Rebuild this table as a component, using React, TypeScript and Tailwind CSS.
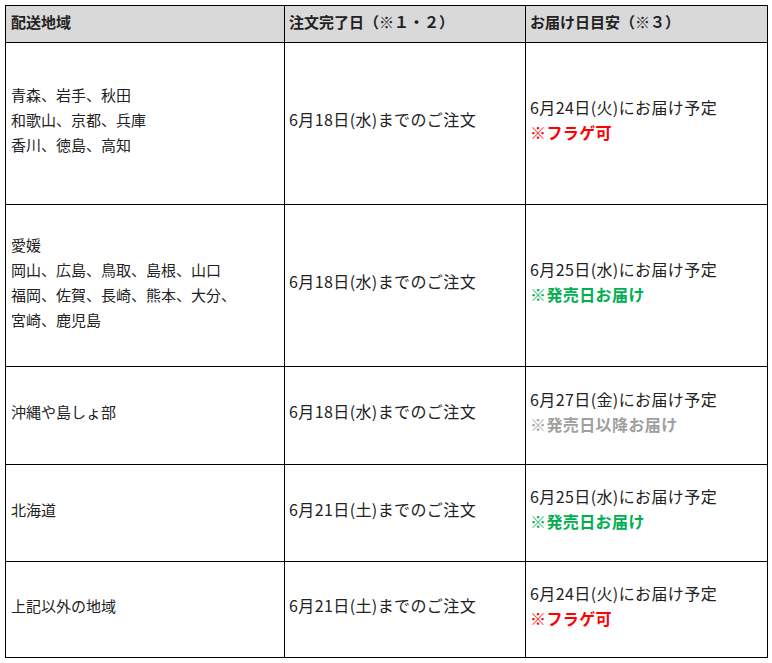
const font = { fontFamily: '"Noto Sans CJK JP", "Noto Sans", sans-serif' }

type Note = { text: string; color: string }

const rows: { h: string; areas: string[]; order: string; delivery: string; note: Note }[] = [
  {
    h: "h-[162px]",
    areas: ["青森、岩手、秋田", "和歌山、京都、兵庫", "香川、徳島、高知"],
    order: "6月18日(水)までのご注文",
    delivery: "6月24日(火)にお届け予定",
    note: { text: "※フラゲ可", color: "text-[#ff0000]" },
  },
  {
    h: "h-[162px]",
    areas: ["愛媛", "岡山、広島、鳥取、島根、山口", "福岡、佐賀、長崎、熊本、大分、", "宮崎、鹿児島"],
    order: "6月18日(水)までのご注文",
    delivery: "6月25日(水)にお届け予定",
    note: { text: "※発売日お届け", color: "text-[#00b050]" },
  },
  {
    h: "h-[98px]",
    areas: ["沖縄や島しょ部"],
    order: "6月18日(水)までのご注文",
    delivery: "6月27日(金)にお届け予定",
    note: { text: "※発売日以降お届け", color: "text-[#a0a0a0]" },
  },
  {
    h: "h-[97px]",
    areas: ["北海道"],
    order: "6月21日(土)までのご注文",
    delivery: "6月25日(水)にお届け予定",
    note: { text: "※発売日お届け", color: "text-[#00b050]" },
  },
  {
    h: "h-[96px]",
    areas: ["上記以外の地域"],
    order: "6月21日(土)までのご注文",
    delivery: "6月24日(火)にお届け予定",
    note: { text: "※フラゲ可", color: "text-[#ff0000]" },
  },
]

export default function App() {
  return (
    <div className="min-h-[663px] bg-white pt-[5px] pl-[5px]" style={font}>
      <table className="w-[762px] table-fixed border-collapse text-[#222]">
        <colgroup>
          <col className="w-[279px]" />
          <col className="w-[241px]" />
          <col className="w-[242px]" />
        </colgroup>
        <thead>
          <tr className="h-[37px] bg-[#d9d9d9]">
            <th className="border border-black px-[5px] pb-[3px] text-left align-middle text-[15px] font-bold">配送地域</th>
            <th className="border border-black px-[4px] pb-[3px] text-left align-middle text-[15px] font-bold">注文完了日（※１・２）</th>
            <th className="border border-black px-[4px] pb-[3px] text-left align-middle text-[15px] font-bold">お届け日目安（※３）</th>
          </tr>
        </thead>
        <tbody>
          {rows.map((r, i) => (
            <tr key={i} className={r.h}>
              <td className="border border-black px-[5px] pb-[8px] align-middle text-[15px] leading-[25px]">
                {r.areas.map((a, j) => (
                  <div key={j}>{a}</div>
                ))}
              </td>
              <td className="border border-black px-[4px] pb-[8px] align-middle text-[16px] leading-[25px] tracking-[0.4px]">
                {r.order}
              </td>
              <td className="border border-black px-[4px] pb-[8px] align-middle text-[16px] leading-[25px] tracking-[0.4px]">
                <div>{r.delivery}</div>
                <div className={`font-bold ${r.note.color}`}>{r.note.text}</div>
              </td>
            </tr>
          ))}
        </tbody>
      </table>
    </div>
  )
}
